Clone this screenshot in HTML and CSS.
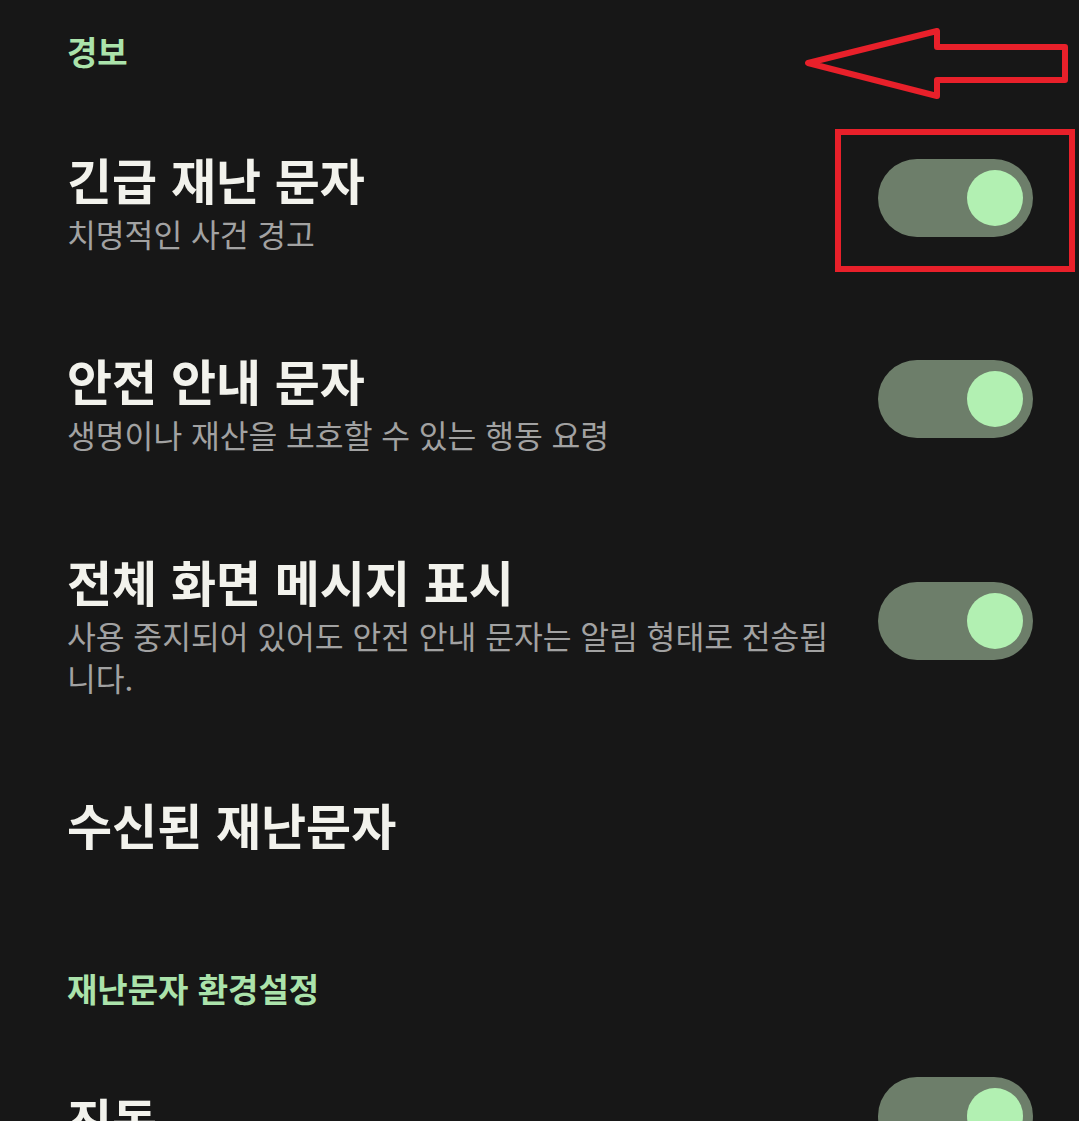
FILE: index.html
```html
<!DOCTYPE html>
<html lang="ko">
<head>
<meta charset="utf-8">
<link rel="stylesheet" href="styles.css">
</head>
<body>
<div class="page">
  <div class="header first">경보</div>
  <div class="row">
    <div class="text">
      <div class="title">긴급 재난 문자</div>
      <div class="sub">치명적인 사건 경고</div>
    </div>
    <div class="toggle"><div class="thumb"></div></div>
  </div>
  <div class="row">
    <div class="text">
      <div class="title">안전 안내 문자</div>
      <div class="sub">생명이나 재산을 보호할 수 있는 행동 요령</div>
    </div>
    <div class="toggle"><div class="thumb"></div></div>
  </div>
  <div class="row">
    <div class="text">
      <div class="title">전체 화면 메시지 표시</div>
      <div class="sub">사용 중지되어 있어도 안전 안내 문자는 알림 형태로 전송됩니다.</div>
    </div>
    <div class="toggle"><div class="thumb"></div></div>
  </div>
  <div class="row">
    <div class="text">
      <div class="title">수신된 재난문자</div>
    </div>
  </div>
  <div class="header">재난문자 환경설정</div>
  <div class="row">
    <div class="text">
      <div class="title">진동</div>
    </div>
    <div class="toggle"><div class="thumb"></div></div>
  </div>

  <svg class="annot" width="1079" height="300" viewBox="0 0 1079 300">
    <polygon points="808,63 937,31 937,47 1065,47 1065,80 937,80 937,96" fill="none" stroke="#e8202a" stroke-width="6" stroke-linejoin="round"/>
    <rect x="838" y="132" width="234" height="137" fill="none" stroke="#e8202a" stroke-width="6"/>
  </svg>
</div>
</body>
</html>
```
FILE: styles.css
```css
html, body {
  margin: 0;
  padding: 0;
  background: #171717;
}
body {
  width: 1079px;
  height: 1121px;
  overflow: hidden;
  font-family: "Noto Sans CJK KR", "Noto Sans", sans-serif;
}
.page {
  position: relative;
  height: 1121px;
  overflow: hidden;
}
.header {
  color: #abe3ab;
  font-size: 33px;
  font-weight: 700;
  line-height: 40px;
  padding: 65px 66px 29px 67px;
}
.header.first {
  padding-top: 31px;
}
.row {
  display: flex;
  align-items: center;
  padding: 46px 46px 46px 67px;
  gap: 40px;
}
.text {
  flex: 1;
  min-width: 0;
}
.title {
  color: #f2f2ec;
  font-size: 49px;
  font-weight: 700;
  line-height: 66px;
}
.sub {
  color: #a2a2a2;
  font-size: 31.3px;
  line-height: 42px;
  margin-top: 1px;
}
.toggle {
  flex: 0 0 auto;
  width: 155px;
  height: 78px;
  border-radius: 39px;
  background: #6d7e6a;
  display: flex;
  align-items: center;
  justify-content: flex-end;
  padding-right: 10px;
  box-sizing: border-box;
  margin-top: -6px;
}
.thumb {
  width: 56px;
  height: 56px;
  border-radius: 50%;
  background: #b2f0b2;
}
.annot {
  position: absolute;
  left: 0;
  top: 0;
  pointer-events: none;
}
```
